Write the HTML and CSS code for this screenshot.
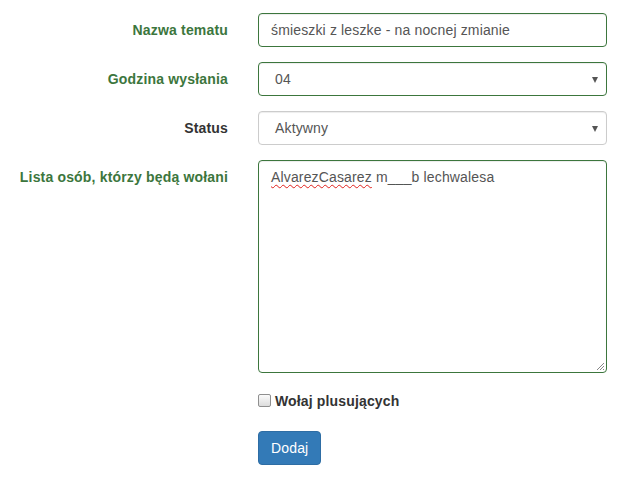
FILE: index.html
```html
<!DOCTYPE html>
<html lang="pl">
<head>
<meta charset="utf-8">
<title>Formularz</title>
<link rel="stylesheet" href="styles.css">
</head>
<body>
<form class="form">
  <div class="group success">
    <label class="lbl">Nazwa tematu</label>
    <div class="field">
      <div class="control">śmieszki z leszke - na nocnej zmianie</div>
    </div>
  </div>
  <div class="group success">
    <label class="lbl">Godzina wysłania</label>
    <div class="field">
      <div class="control select"><span>04</span><i class="caret"></i></div>
    </div>
  </div>
  <div class="group">
    <label class="lbl neutral">Status</label>
    <div class="field">
      <div class="control select"><span>Aktywny</span><i class="caret"></i></div>
    </div>
  </div>
  <div class="group success">
    <label class="lbl">Lista osób, którzy będą wołani</label>
    <div class="field">
      <div class="control area"><span class="spell">AlvarezCasarez</span> m___b lechwalesa
        <svg class="grip" width="9" height="9" viewBox="0 0 9 9"><path d="M8 1 L1 8 M8 4 L4 8 M8 7 L7 8" stroke="#888" stroke-width="1"/></svg>
      </div>
    </div>
  </div>
  <div class="group">
    <div></div>
    <div class="field">
      <label class="check"><span class="box"></span>Wołaj plusujących</label>
    </div>
  </div>
  <div class="group">
    <div></div>
    <div class="field">
      <button type="button" class="btn">Dodaj</button>
    </div>
  </div>
</form>
</body>
</html>
```
FILE: styles.css
```css
html, body {
  margin: 0;
  padding: 0;
  background: #fff;
}
body {
  font-family: "Liberation Sans", Arial, sans-serif;
  font-size: 14px;
  line-height: 20px;
  color: #333;
  letter-spacing: 0.15px;
}
.form {
  padding: 13px 15px 0 0;
  width: 607px;
}
.group {
  display: grid;
  grid-template-columns: 228px 1fr;
  column-gap: 30px;
  margin-bottom: 15px;
}
.lbl {
  font-weight: bold;
  text-align: right;
  padding-top: 7px;
  color: #3c763d;
  letter-spacing: 0.17px;
}
.lbl.neutral {
  color: #333;
}
.control {
  box-sizing: border-box;
  height: 34px;
  padding: 6px 12px;
  border: 1px solid #ccc;
  border-radius: 4px;
  box-shadow: inset 0 1px 1px rgba(0,0,0,.075);
  color: #555;
  white-space: nowrap;
  position: relative;
}
.success .control {
  border-color: #3c763d;
}
.select {
  padding-left: 16px;
}
.caret {
  position: absolute;
  right: 8px;
  top: 14px;
  width: 0;
  height: 0;
  border-left: 3.5px solid transparent;
  border-right: 3.5px solid transparent;
  border-top: 6px solid #555;
}
.area {
  height: 213px;
}
.spell {
  text-decoration: underline wavy #e0201b;
  text-decoration-thickness: 1px;
  text-underline-offset: 2px;
}
.grip {
  position: absolute;
  right: 1px;
  bottom: 1px;
}
.check {
  display: flex;
  align-items: center;
  height: 26px;
  padding-bottom: 2px;
  font-weight: bold;
  color: #333;
}
.box {
  box-sizing: border-box;
  width: 13px;
  height: 13px;
  margin-right: 4px;
  margin-top: -1px;
  border: 1px solid #8f8f8f;
  border-radius: 2px;
  background: linear-gradient(#fbfbfb, #dcdcdc);
}
.btn {
  box-sizing: border-box;
  height: 34px;
  padding: 6px 12px;
  font-family: "Liberation Sans", Arial, sans-serif;
  font-size: 14px;
  line-height: 20px;
  letter-spacing: 0.15px;
  color: #fff;
  background: #337ab7;
  border: 1px solid #2e6da4;
  border-radius: 4px;
}
```
